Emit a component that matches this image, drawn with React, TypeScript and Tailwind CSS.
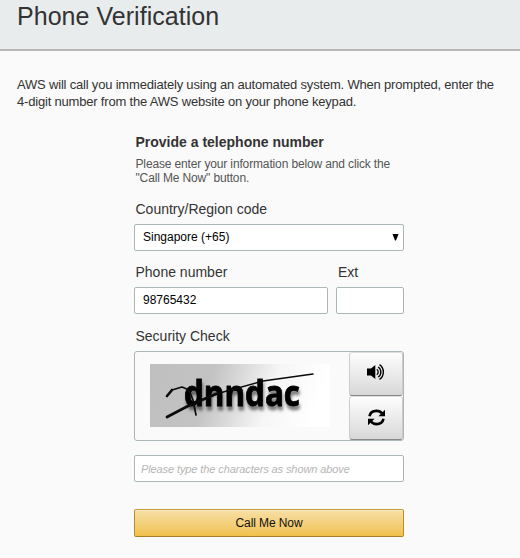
import React from 'react';

function VolumeIcon() {
  return (
    <svg className="mb-1" width="20" height="18" viewBox="0 0 20 18" fill="none" stroke="#000">
      <path d="M1 5.500h4L9.300 2v14L5 12.500H1z" fill="#000" stroke="none" />
      <path d="M10.800 6.300a3.300 3.300 0 0 1 0 5.400" strokeWidth="1.300" />
      <path d="M12.200 4a6 6 0 0 1 0 10" strokeWidth="1.400" />
      <path d="M13.500 1.600a9 9 0 0 1 0 14.800" strokeWidth="1.400" />
    </svg>
  );
}

function RefreshIcon() {
  return (
    <svg className="mb-0.5" width="17" height="17" viewBox="0 0 17 17" fill="none" stroke="#000" strokeWidth="2.600">
      <path d="M1.500 7.200C2.200 3.800 5 1.900 8.500 1.900c2.400 0 4.300.9 5.600 2.600" />
      <path d="M17 .8v6.400h-6.600z" fill="#000" stroke="none" />
      <path d="M15.500 9.800c-.7 3.400-3.500 5.300-7 5.300-2.400 0-4.300-.9-5.600-2.600" />
      <path d="M0 16.200V9.800h6.600z" fill="#000" stroke="none" />
    </svg>
  );
}

function CheckPicture() {
  return (
    <svg width="180" height="63" viewBox="0 0 180 63">
      <defs>
        <linearGradient id="fade" x1="0" y1="0" x2="1" y2="0.12">
          <stop offset="0" stopColor="#bfbfbf" />
          <stop offset="0.36" stopColor="#c3c3c3" />
          <stop offset="0.72" stopColor="#f6f6f6" />
          <stop offset="1" stopColor="#ffffff" />
        </linearGradient>
        <filter id="shade" x="-10%" y="-20%" width="120%" height="150%">
          <feDropShadow dx="1" dy="4" stdDeviation="1.800" floodColor="#000" floodOpacity="0.5" />
        </filter>
      </defs>
      <rect width="180" height="63" fill="url(#fade)" />
      <text x="34" y="41.500" textLength="116" lengthAdjust="spacingAndGlyphs" fontFamily="'Open Sans', sans-serif" fontWeight="700" fontSize="36" fill="#000" stroke="#000" strokeWidth="0.900" filter="url(#shade)">dnndac</text>
      <g fill="none" stroke="#0a0a0a" strokeLinecap="round" strokeLinejoin="round">
        <path d="M17 32l5-6" strokeWidth="2.600" />
        <path d="M22 26l10-3 7 3 4 10 3 15" strokeWidth="1.700" />
        <path d="M17 53L38 42 66 30" strokeWidth="2.700" />
        <path d="M66 30l47-13 50-7" strokeWidth="1.500" />
      </g>
    </svg>
  );
}

export default function App() {
  return (
    <div className="h-[558px] w-[520px] overflow-hidden bg-[#fafafa] font-['Liberation_Sans',Arial,sans-serif] text-[#333]">
      <header className="h-[51px] border-b-2 border-[#b7b7b7] bg-[#e9eced] pl-[17px]">
        <h1 className="text-[25px] leading-8 tracking-[0.04px] whitespace-nowrap">Phone Verification</h1>
      </header>
      <p className="mt-[25px] ml-[17px] text-[13px] leading-[17px] tracking-[-0.19px] whitespace-nowrap">
        AWS will call you immediately using an automated system. When prompted, enter the
        <br />
        4-digit number from the AWS website on your phone keypad.
      </p>
      <form className="mt-6 ml-[134px] w-[270px]">
        <h2 className="pl-[1.5px] text-[14px] leading-4 font-bold">Provide a telephone number</h2>
        <p className="mt-[7px] pl-[1.5px] text-[12px] leading-[14px] tracking-[-0.14px] whitespace-nowrap text-[#555]">
          Please enter your information below and click the
          <br />
          "Call Me Now" button.
        </p>
        <div className="mt-4 pl-[1.5px] text-[14px] leading-4">Country/Region code</div>
        <div className="mt-[7px] flex h-[27px] items-center justify-between rounded-[2px] border border-[#aab7b8] bg-white pr-1 pb-0.5 pl-2 text-[12px] text-black">
          <span>Singapore (+65)</span>
          <svg className="mt-px" width="7" height="7" viewBox="0 0 7 7"><path d="M.5 0h6L4 6.500H3z" /></svg>
        </div>
        <div className="mt-[13px] flex gap-2 text-[14px] leading-4">
          <label className="w-[194px] pl-[1.5px]">
            Phone number
            <input className="mt-[7px] -ml-[1.5px] block h-[27px] w-[194px] rounded-[2px] border border-[#aab7b8] bg-white px-2 pb-0.5 text-[12px] text-black" defaultValue="98765432" />
          </label>
          <label className="w-[68px] pl-0.5">
            Ext
            <input className="mt-[7px] -ml-0.5 block h-[27px] w-[68px] rounded-[2px] border border-[#aab7b8] bg-white px-2 text-[12px] text-black" />
          </label>
        </div>
        <div className="mt-[14px] pl-[1.5px] text-[14px] leading-4">Security Check</div>
        <div className="mt-[7px] flex h-[90px] justify-between rounded-[3px] border border-[#aab7b8] pl-[15px]">
          <div className="pt-3"><CheckPicture /></div>
          <div className="flex w-[54px] flex-col">
            <button type="button" className="flex h-11 items-center justify-center rounded-[3px] border border-t-[#ddd] border-r-[#ccc] border-b-[#888] border-l-[#ccc] bg-linear-to-b from-[#fdfdfd] to-[#d8d8d8]"><VolumeIcon /></button>
            <button type="button" className="flex h-11 items-center justify-center rounded-[3px] border border-t-[#ddd] border-r-[#ccc] border-b-[#888] border-l-[#ccc] bg-linear-to-b from-[#fdfdfd] to-[#d8d8d8]"><RefreshIcon /></button>
          </div>
        </div>
        <input className="mt-[14px] block h-[27px] w-full rounded-[2px] border border-[#aab7b8] bg-white px-1.5 text-[11px] tracking-[-0.1px] placeholder:text-[#b5b5b5] placeholder:italic" placeholder="Please type the characters as shown above" />
        <button type="button" className="mt-[27px] block h-7 w-full rounded-[2px] border border-t-[#c89c35] border-r-[#b98d2c] border-b-[#a88025] border-l-[#b98d2c] bg-linear-to-b from-[#f7dfa5] to-[#f0c14b] text-[12px] tracking-[-0.1px] text-[#111] shadow-[inset_0_1px_0_rgba(255,255,255,0.4)]">Call Me Now</button>
      </form>
    </div>
  );
}
